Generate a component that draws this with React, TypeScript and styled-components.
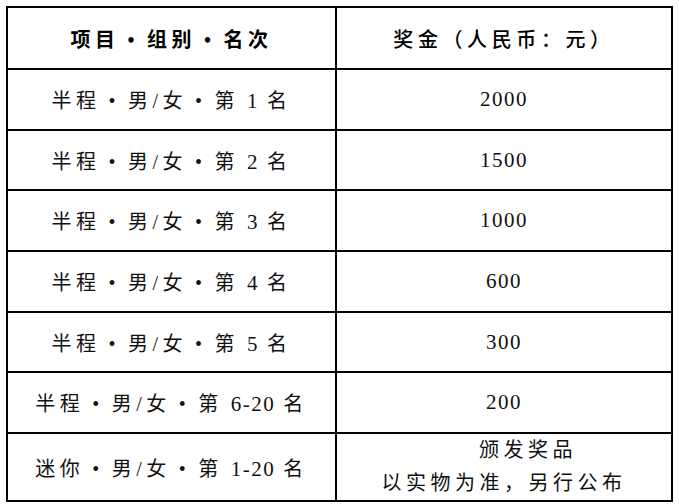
import React from "react";
import styled, { createGlobalStyle } from "styled-components";

const GlobalStyle = createGlobalStyle`
  html, body {
    margin: 0;
    padding: 0;
    background: #ffffff;
  }
  body {
    font-family: "Liberation Serif", "Noto Sans CJK SC", serif;
    color: #000;
  }
`;

interface PrizeRow {
  label: string;
  amount: string[];
}

const rows: PrizeRow[] = [
  { label: "半程 • 男/女 • 第 1 名", amount: ["2000"] },
  { label: "半程 • 男/女 • 第 2 名", amount: ["1500"] },
  { label: "半程 • 男/女 • 第 3 名", amount: ["1000"] },
  { label: "半程 • 男/女 • 第 4 名", amount: ["600"] },
  { label: "半程 • 男/女 • 第 5 名", amount: ["300"] },
  { label: "半程 • 男/女 • 第 6-20 名", amount: ["200"] },
  { label: "迷你 • 男/女 • 第 1-20 名", amount: ["颁发奖品", "以实物为准，另行公布"] },
];

// wrap the rank numbers so they keep the latin serif and a tight spacing
const renderLabel = (label: string) =>
  label.split(/(\d[\d-]*)/).map((part, i) =>
    /^\d/.test(part) ? <Num key={i}>{part}</Num> : <span key={i}>{part}</span>
  );

const App: React.FC = () => {
  return (
    <>
      <GlobalStyle />
      <Page>
        <PrizeTable>
          <colgroup>
            <col style={{ width: "329px" }} />
            <col />
          </colgroup>
          <thead>
            <HeadRow>
              <HeadCell $bold>项目 • 组别 • 名次</HeadCell>
              <HeadCell>奖金（人民币：元）</HeadCell>
            </HeadRow>
          </thead>
          <tbody>
            {rows.map((row, index) => (
              <BodyRow key={index} $tall={row.amount.length > 1}>
                <Cell>{renderLabel(row.label)}</Cell>
                <Cell>
                  {row.amount.length > 1 ? (
                    row.amount.map((line, i) => (
                      <Line key={i} $indent={i === 0}>
                        {line}
                      </Line>
                    ))
                  ) : (
                    <Amount>{row.amount[0]}</Amount>
                  )}
                </Cell>
              </BodyRow>
            ))}
          </tbody>
        </PrizeTable>
      </Page>
    </>
  );
};

const Page = styled.div`
  padding: 6px 0 0 6px;
`;

const PrizeTable = styled.table`
  width: 667px;
  border-collapse: collapse;
  table-layout: fixed;
  border: 2px solid #000;
`;

const HeadRow = styled.tr`
  height: 62px;
`;

const BodyRow = styled.tr<{ $tall?: boolean }>`
  height: ${(p) => (p.$tall ? "67px" : "60.7px")};
`;

const HeadCell = styled.th<{ $bold?: boolean }>`
  border: 2px solid #000;
  padding: 0;
  text-align: center;
  vertical-align: middle;
  font-family: "Liberation Serif", "Noto Sans CJK SC", serif;
  font-size: 20px;
  font-weight: ${(p) => (p.$bold ? 700 : 500)};
  letter-spacing: ${(p) => (p.$bold ? "4.5px" : "4.6px")};
  word-spacing: -1.5px;
  color: #000;
`;

const Cell = styled.td`
  border: 2px solid #000;
  padding: 0;
  text-align: center;
  vertical-align: middle;
  font-size: 20px;
  letter-spacing: 4.5px;
  word-spacing: -1.5px;
  color: #111;
`;

const Num = styled.span`
  font-family: "Liberation Serif", serif;
  font-size: 21px;
  letter-spacing: 1.5px;
`;

const Amount = styled.span`
  font-size: 21px;
  letter-spacing: 1.5px;
`;

const Line = styled.div<{ $indent?: boolean }>`
  line-height: 33px;
  padding-left: ${(p) => (p.$indent ? "48px" : "0")};
`;

export default App;
